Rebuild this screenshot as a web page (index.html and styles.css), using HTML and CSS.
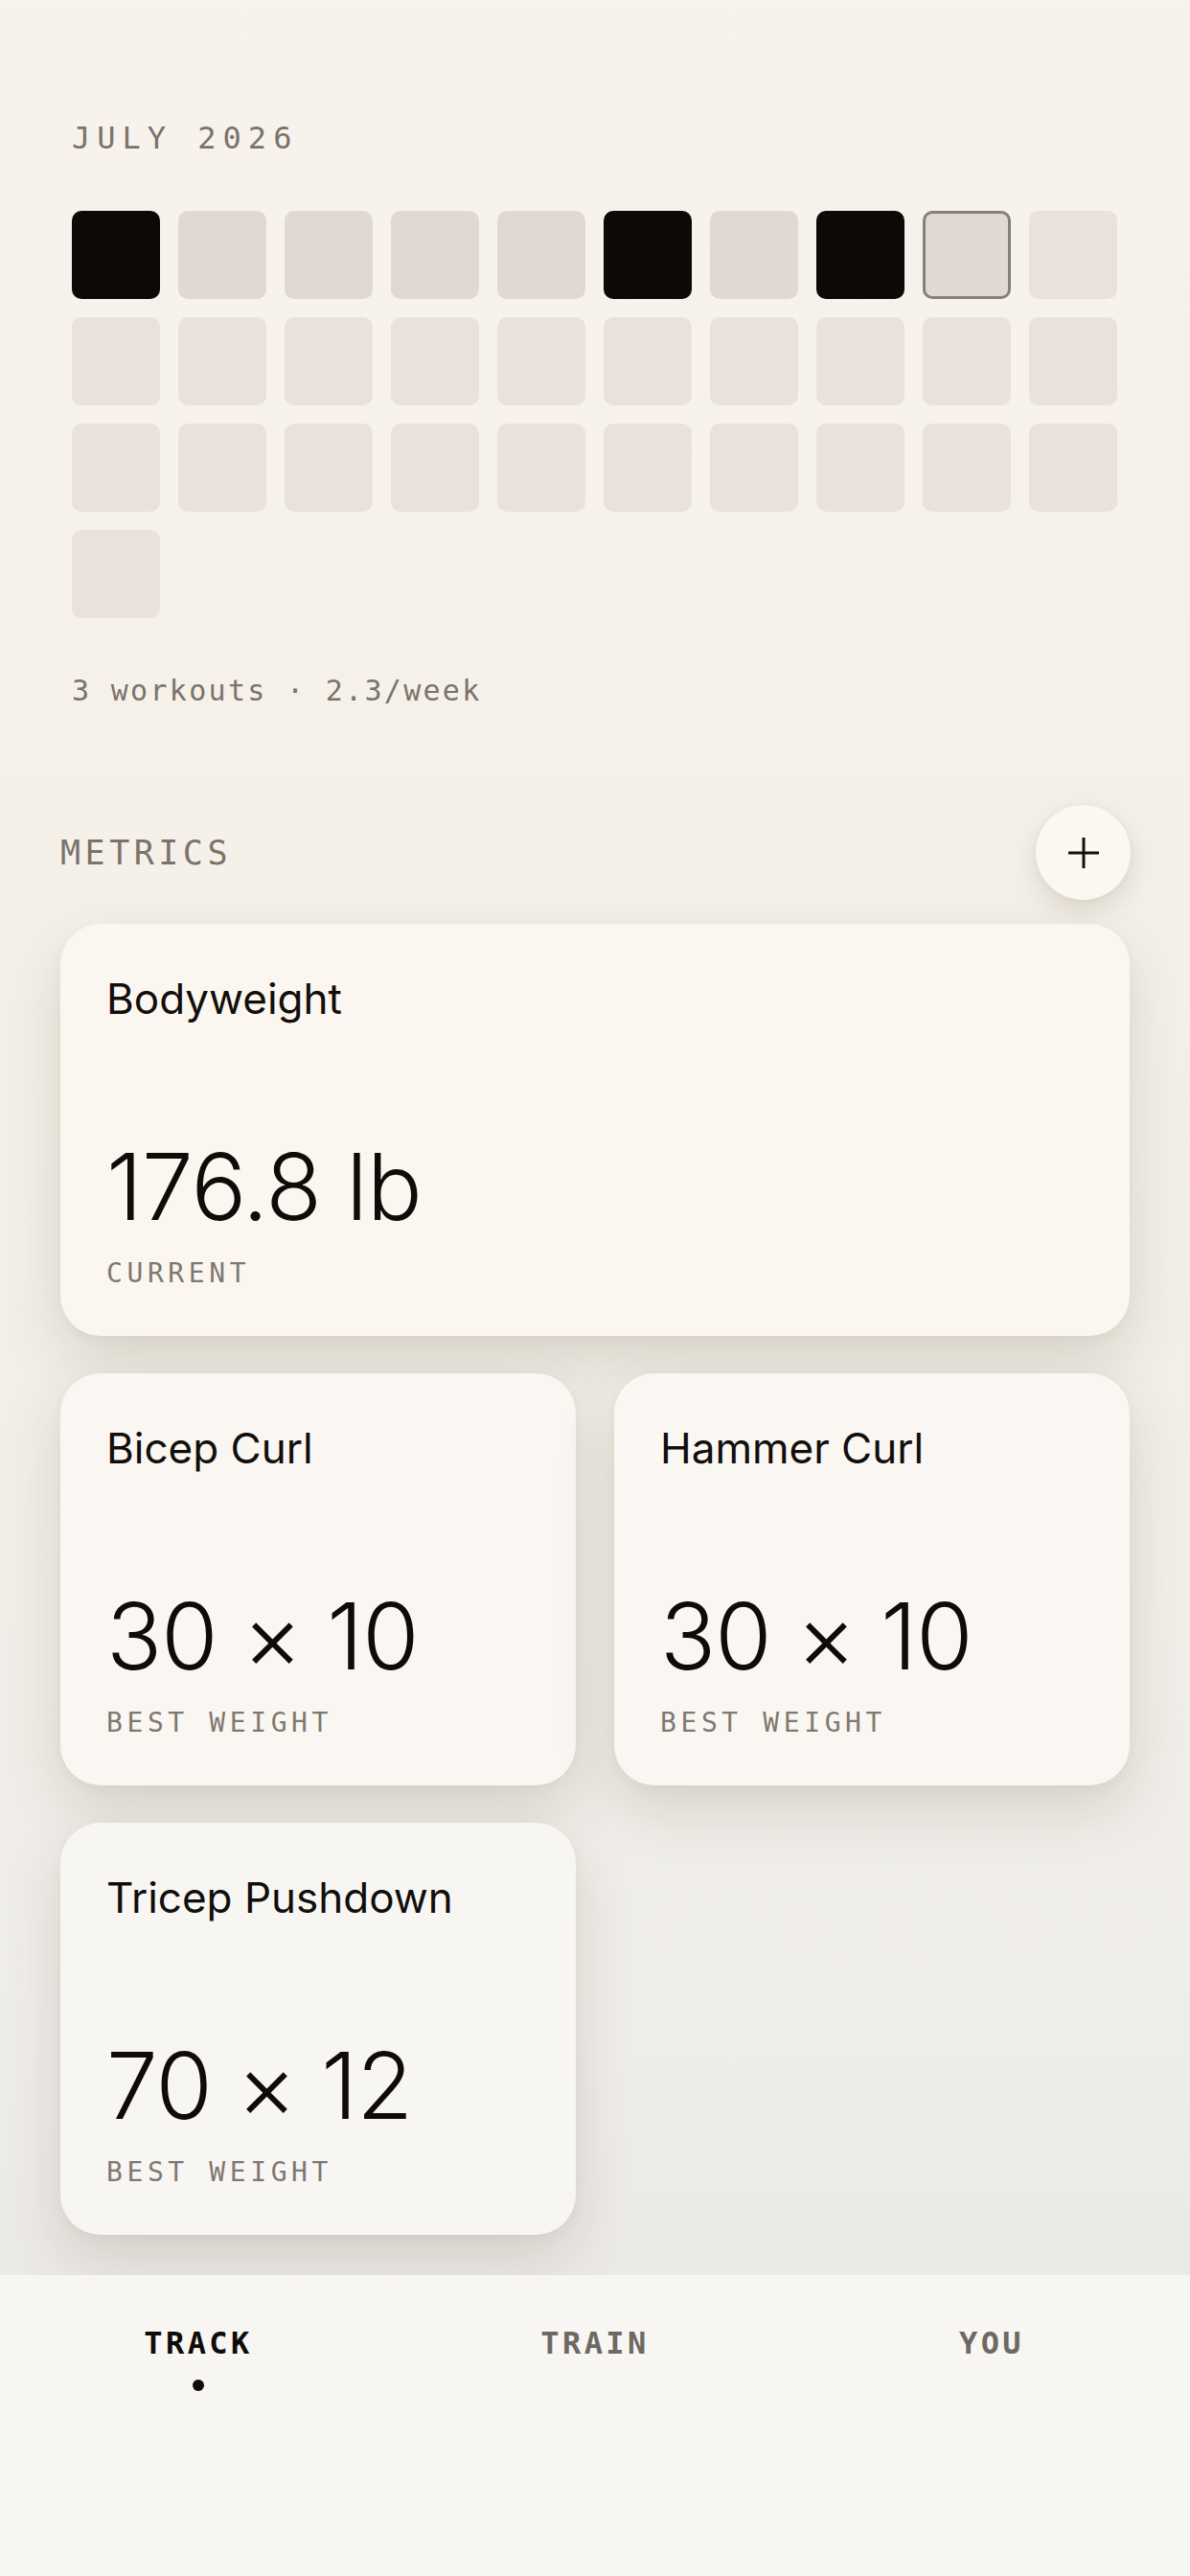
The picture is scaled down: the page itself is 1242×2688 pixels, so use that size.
FILE: index.html
```html
<!DOCTYPE html>
<html lang="en">
<head>
  <meta charset="UTF-8" />
  <meta name="viewport" content="width=device-width, initial-scale=1.0"/>
  <title>Track</title>
  <link rel="stylesheet" href="styles.css">
</head>
<body>

  <div class="app">
    <main class="main">

      <section class="calendar">
        <div class="month">JULY 2026</div>
        <div class="days">
          <div class="day done"></div>
          <div class="day past"></div>
          <div class="day past"></div>
          <div class="day past"></div>
          <div class="day past"></div>
          <div class="day done"></div>
          <div class="day past"></div>
          <div class="day done"></div>
          <div class="day today"></div>
          <div class="day"></div>

          <div class="day"></div><div class="day"></div><div class="day"></div><div class="day"></div><div class="day"></div>
          <div class="day"></div><div class="day"></div><div class="day"></div><div class="day"></div><div class="day"></div>

          <div class="day"></div><div class="day"></div><div class="day"></div><div class="day"></div><div class="day"></div>
          <div class="day"></div><div class="day"></div><div class="day"></div><div class="day"></div><div class="day"></div>

          <div class="day"></div>
        </div>
        <div class="summary">3 workouts · 2.3/week</div>
      </section>

      <section class="metrics">
        <div class="metrics-head">
          <span class="metrics-title">METRICS</span>
          <button class="add" aria-label="Add metric">
            <svg width="36" height="36" viewBox="0 0 36 36">
              <path d="M18 2v32M2 18h32" stroke="#14100c" stroke-width="3" fill="none"/>
            </svg>
          </button>
        </div>

        <div class="cards">
          <div class="card wide">
            <div class="card-name">Bodyweight</div>
            <div class="card-value">176.8 lb</div>
            <div class="card-label">CURRENT</div>
          </div>
          <div class="card mid">
            <div class="card-name">Bicep Curl</div>
            <div class="card-value">30 × 10</div>
            <div class="card-label">BEST WEIGHT</div>
          </div>
          <div class="card mid">
            <div class="card-name">Hammer Curl</div>
            <div class="card-value">30 × 10</div>
            <div class="card-label">BEST WEIGHT</div>
          </div>
          <div class="card low">
            <div class="card-name">Tricep Pushdown</div>
            <div class="card-value">70 × 12</div>
            <div class="card-label">BEST WEIGHT</div>
          </div>
        </div>
      </section>

    </main>

    <nav class="tabs">
      <a class="tab active">TRACK<span class="dot"></span></a>
      <a class="tab">TRAIN</a>
      <a class="tab">YOU</a>
    </nav>
  </div>

</body>
</html>
```

FILE: styles.css
```css
/* ─── Reset & Body ───────────────────────────────────────────────────────── */
* { box-sizing: border-box; margin: 0; padding: 0; }
body {
  min-height: 100vh;
  background: linear-gradient(180deg, #f8f2ec 0%, #f5f1e9 30%, #f2efe8 55%, #efedea 80%, #e6e5e2 100%);
  font-family: Inter, "Liberation Sans", sans-serif;
  color: #0f0b08;
}

.app {
  display: flex;
  flex-direction: column;
  min-height: 100vh;
}
.main { flex: 1; padding-bottom: 42px; }

/* ─── Calendar ───────────────────────────────────────────────────────────── */
.calendar { padding: 124px 75px 0; }
.month {
  font-family: "DejaVu Sans Mono", monospace;
  font-size: 32px;
  line-height: 40px;
  letter-spacing: 7px;
  color: #7a736b;
}
.days {
  display: grid;
  grid-template-columns: repeat(10, 92px);
  grid-auto-rows: 92px;
  gap: 19px;
  margin-top: 56px;
}
.day {
  border-radius: 10px;
  background: #e8e2db;
}
.day.past { background: #e0d9d2; }
.day.done { background: #0e0906; }
.day.today {
  background: #e0d9d2;
  border: 3px solid #85807a;
}
.summary {
  margin-top: 56px;
  font-family: "DejaVu Sans Mono", monospace;
  font-size: 30px;
  line-height: 40px;
  letter-spacing: 2.3px;
  color: #7a736b;
}

/* ─── Metrics ────────────────────────────────────────────────────────────── */
.metrics { padding: 0 63px; margin-top: 99px; }
.metrics-head {
  display: flex;
  align-items: center;
  justify-content: space-between;
  height: 99px;
}
.metrics-title {
  font-family: "DejaVu Sans Mono", monospace;
  font-size: 35px;
  letter-spacing: 4.5px;
  color: #7a736b;
}
.add {
  width: 99px;
  height: 99px;
  margin-right: -1px;
  border: none;
  border-radius: 50%;
  background: #fbf7f1;
  box-shadow: 0 10px 30px rgba(90, 70, 40, 0.16), 0 2px 6px rgba(90, 70, 40, 0.05);
  display: flex;
  align-items: center;
  justify-content: center;
  cursor: pointer;
}

.cards {
  display: grid;
  grid-template-columns: 1fr 1fr;
  column-gap: 40px;
  row-gap: 39px;
  margin-top: 25px;
}
.card {
  height: 430px;
  border-radius: 42px;
  padding: 52px 48px 48px;
  display: flex;
  flex-direction: column;
  box-shadow: 0 24px 60px rgba(90, 70, 40, 0.17), 0 4px 12px rgba(90, 70, 40, 0.04);
}
.card.wide { grid-column: span 2; background: #fcf6f0; }
.card.mid { background: #faf7f2; }
.card.low { background: #f8f6f3; }

.card-name {
  font-size: 44px;
  line-height: 52px;
  color: #120e0b;
}
.card-value {
  margin-top: auto;
  margin-bottom: 26px;
  font-size: 96px;
  font-weight: 300;
  line-height: 96px;
  letter-spacing: -0.8px;
  color: #0f0b08;
}
.card-label {
  font-family: "DejaVu Sans Mono", monospace;
  font-size: 28px;
  line-height: 34px;
  letter-spacing: 4.6px;
  color: #7f7870;
}

/* ─── Tab Bar ────────────────────────────────────────────────────────────── */
.tabs {
  display: grid;
  grid-template-columns: repeat(3, 1fr);
  height: 314px;
  padding-top: 51px;
  background: #f7f6f3;
}
.tab {
  display: flex;
  flex-direction: column;
  align-items: center;
  font-family: "DejaVu Sans Mono", monospace;
  font-weight: bold;
  font-size: 32px;
  line-height: 40px;
  letter-spacing: 3.4px;
  color: #6e6961;
  cursor: pointer;
}
.tab.active { color: #0f0b08; }
.dot {
  width: 12px;
  height: 12px;
  margin-top: 18px;
  border-radius: 50%;
  background: #0f0b08;
}
```
